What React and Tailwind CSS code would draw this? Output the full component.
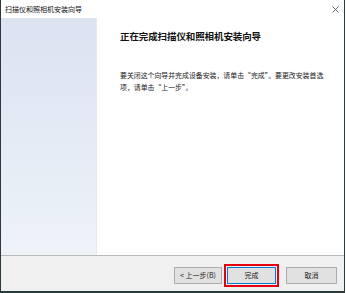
import React from 'react';

const font = { fontFamily: '"Noto Sans CJK SC", "Liberation Sans", sans-serif' };

const Button = ({ label, width, primary }) => (
  <div
    className={`h-[17px] flex items-center justify-center bg-[#e1e1e1] border text-[7px] text-[#222] ${
      primary ? 'border-[#0a78d7]' : 'border-[#adadad]'
    } ${width}`}
  >
    {label}
  </div>
);

export default function App() {
  return (
    <div className="w-[346px] h-[293px] bg-white" style={font}>
      <div className="w-[345px] h-[293px] flex flex-col border-l border-r border-b-2 border-[#2c3a40]">
        <div className="h-[18px] flex items-center justify-between pl-[4px] pr-[5px]">
          <span className="text-[7px] text-[#111] leading-none">扫描仪和照相机安装向导</span>
          <svg width="7" height="7" viewBox="0 0 7 7" className="text-[#555]">
            <path d="M0.5 0.5 L6.5 6.5 M6.5 0.5 L0.5 6.5" stroke="currentColor" strokeWidth="0.9" />
          </svg>
        </div>
        <div className="flex flex-1 border-b border-[#b9b9b9]">
          <div className="w-[96px] bg-gradient-to-b from-[#dbe3f2] to-[#eef3f8] border-r border-[#e4eaf2]" />
          <div className="flex-1 pl-[23px] pr-[8px] pt-[11px]">
            <div className="text-[9.5px] font-bold text-[#111] leading-[14px] tracking-[-0.1px]">
              正在完成扫描仪和照相机安装向导
            </div>
            <div className="mt-[27px] text-[6.9px] leading-[11.5px] text-[#222]">
              要关闭这个向导并完成设备安装，请单击“完成”。要更改安装首选
              <br />
              项，请单击“上一步”。
            </div>
          </div>
        </div>
        <div className="h-[35px] bg-[#f0f0f0] flex items-start justify-end pt-[8px] pr-[7px]">
          <div className="mt-[3px]">
            <Button label="< 上一步(B)" width="w-[48px]" />
          </div>
          <div className="ml-[2px] p-[1px] border-2 border-[#e3000f]">
            <Button label="完成" width="w-[49px]" primary />
          </div>
          <div className="mt-[3px] ml-[7px]">
            <Button label="取消" width="w-[51px]" />
          </div>
        </div>
      </div>
    </div>
  );
}
